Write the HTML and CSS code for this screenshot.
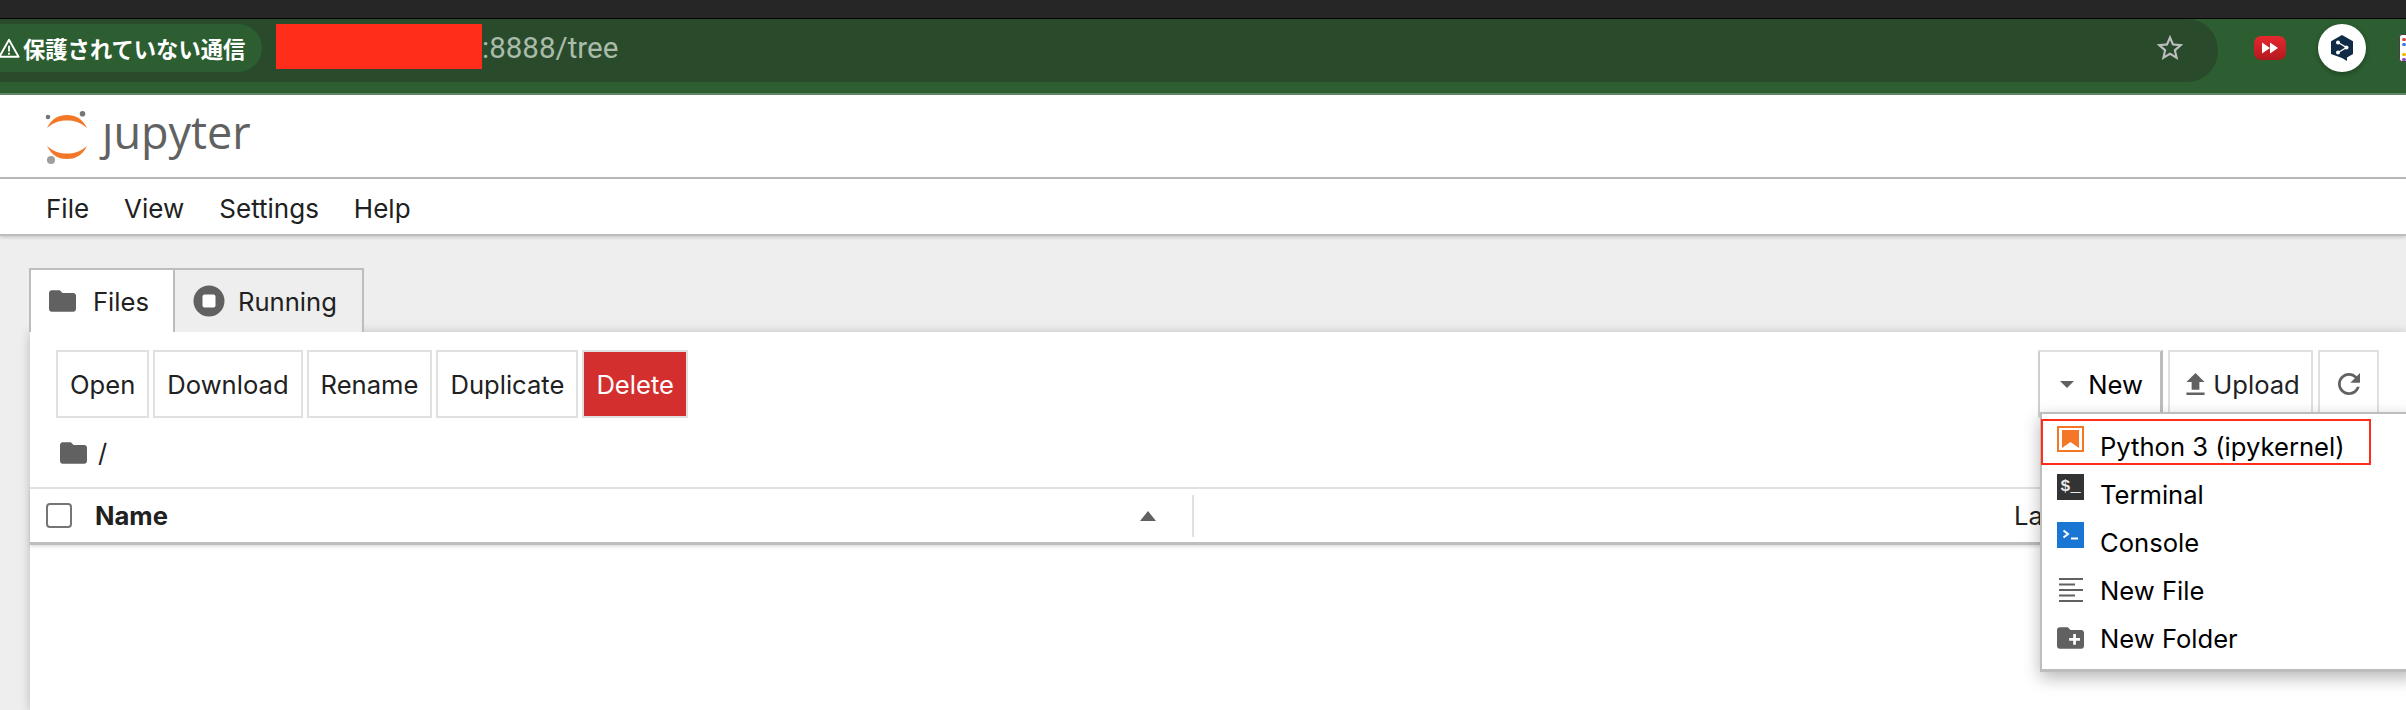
FILE: index.html
```html
<!DOCTYPE html>
<html lang="ja">
<head>
    <meta charset="UTF-8">
    <title>Home</title>
    <link rel="stylesheet" href="styles.css">
</head>
<body>
    <div class="browser-top"></div>
    <div class="browser-bar">
        <div class="address">
            <div class="chip">
                <svg class="warn-icon" viewBox="0 0 20 20"><path d="M10 2.5 18.7 18H1.3z" fill="none" stroke="#fff" stroke-width="1.7" stroke-linejoin="round"/><path d="M9.2 8h1.6v5.2H9.2zM9.2 14.4h1.6v1.7H9.2z" fill="#fff"/></svg>
                <span>保護されていない通信</span>
            </div>
            <div class="redacted"></div>
            <div class="url">:8888/tree</div>
            <svg class="star" viewBox="0 0 24 24"><path d="M22 9.24l-7.19-.62L12 2 9.19 8.63 2 9.24l5.46 4.73L5.82 21 12 17.27 18.18 21l-1.63-7.03L22 9.24zM12 15.4l-3.76 2.27 1-4.28-3.32-2.88 4.38-.38L12 6.1l1.71 4.04 4.38.38-3.32 2.88 1 4.28L12 15.4z"/></svg>
        </div>
        <div class="ext-red">
            <svg viewBox="0 0 32 24"><path d="M8 6.5 16 12l-8 5.500zM16 6.500 24 12l-8 5.500z" fill="#fff"/></svg>
        </div>
        <div class="ext-deepl">
            <svg viewBox="0 0 24 28"><path d="M12 1 23 7.300V20l-6 3.500V27l-5-3L1 20V7.300z" fill="#0f2b46"/><path d="M8 8.500 16.500 13.500 8 18.500" fill="none" stroke="#fff" stroke-width="1.400"/><circle cx="8" cy="8.500" r="2" fill="#fff"/><circle cx="16.500" cy="13.500" r="2" fill="#fff"/><circle cx="8" cy="18.500" r="2" fill="#fff"/></svg>
        </div>
        <div class="ext-list">
            <i class="dot-red"></i><i class="dot-blue"></i><i class="dot-yellow"></i><i class="dot-purple"></i>
        </div>
    </div>

    <header class="top-panel">
        <svg class="jp-mark" viewBox="0 0 44 54">
            <path d="M2 17C7 7 14 4 22 4s15 3 20 13C35 11 29 9.500 22 9.500S9 11 2 17z" fill="#f37726"/>
            <path d="M2 35C9 41 15 42.500 22 42.500S35 41 42 35C37 45 30 48 22 48S7 45 2 35z" fill="#f37726"/>
            <circle cx="3" cy="6" r="2.300" fill="#767677"/>
            <circle cx="37.500" cy="2.800" r="2.800" fill="#767677"/>
            <circle cx="6" cy="49" r="4" fill="#9e9e9e"/>
        </svg>
        <div class="jp-word"><span class="jp-j">j</span>upyter</div>
    </header>

    <nav class="menu-bar">
        <span>File</span>
        <span>View</span>
        <span>Settings</span>
        <span>Help</span>
    </nav>

    <main class="main-area">
        <div class="tabs">
            <div class="tab tab-active">
                <svg class="folder-icon" viewBox="2 4 20 16"><path d="M10 4H4c-1.100 0-1.990.9-1.990 2L2 18c0 1.100.9 2 2 2h16c1.100 0 2-.9 2-2V8c0-1.100-.9-2-2-2h-8l-2-2z"/></svg>
                <span>Files</span>
            </div>
            <div class="tab">
                <svg class="stop-icon" viewBox="0 0 32 32"><circle cx="16" cy="16" r="15.500"/><rect x="9.500" y="9.500" width="13" height="13" rx="2" fill="#fff"/></svg>
                <span>Running</span>
            </div>
        </div>

        <section class="panel">
            <div class="toolbar">
                <button class="btn">Open</button>
                <button class="btn">Download</button>
                <button class="btn">Rename</button>
                <button class="btn">Duplicate</button>
                <button class="btn btn-danger">Delete</button>
                <div class="toolbar-right">
                    <button class="btn btn-new">
                        <svg class="caret" viewBox="0 0 14 7"><path d="M0 0h14L7 7z"/></svg>
                        <span>New</span>
                    </button>
                    <button class="btn btn-upload">
                        <svg class="upload-icon" viewBox="5 3 14 17"><path d="M9 16h6v-6h4l-7-7-7 7h4zm-4 2h14v2H5z"/></svg>
                        <span>Upload</span>
                    </button>
                    <button class="btn btn-refresh">
                        <svg class="refresh-icon" viewBox="4 4 16 16"><path d="M17.650 6.350C16.200 4.900 14.210 4 12 4c-4.420 0-7.990 3.580-7.990 8s3.570 8 7.990 8c3.730 0 6.840-2.550 7.730-6h-2.080c-.82 2.330-3.040 4-5.650 4-3.310 0-6-2.690-6-6s2.690-6 6-6c1.660 0 3.140.69 4.220 1.780L13 11h7V4l-2.350 2.350z"/></svg>
                    </button>
                </div>
            </div>

            <div class="crumbs">
                <svg class="folder-icon" viewBox="2 4 20 16"><path d="M10 4H4c-1.100 0-1.990.9-1.990 2L2 18c0 1.100.9 2 2 2h16c1.100 0 2-.9 2-2V8c0-1.100-.9-2-2-2h-8l-2-2z"/></svg>
                <span>/</span>
            </div>

            <div class="list-header">
                <div class="col-name">
                    <span class="checkbox"></span>
                    <span class="col-title">Name</span>
                    <svg class="sort-caret" viewBox="0 0 16 10"><path d="M8 0l8 10H0z"/></svg>
                </div>
                <div class="col-modified">Last Modified</div>
            </div>
        </section>
    </main>

    <div class="new-menu">
        <div class="menu-item item-hilite">
            <svg class="item-icon icon-top" viewBox="0 0 27 26"><rect x="1" y="1" width="25" height="24" fill="#fff" stroke="#f37726" stroke-width="2"/><path d="M5 4h17v18l-8.500-6L5 22z" fill="#f37726"/></svg>
            <span>Python 3 (ipykernel)</span>
        </div>
        <div class="menu-item">
            <div class="item-icon icon-top term-icon">$_</div>
            <span>Terminal</span>
        </div>
        <div class="menu-item">
            <svg class="item-icon icon-top" viewBox="0 0 27 26"><rect width="27" height="26" fill="#1976d2"/><path d="M6.500 8.500 11 12l-4.500 3.500" fill="none" stroke="#fff" stroke-width="2"/><path d="M14 15.500h7v2h-7z" fill="#fff"/></svg>
            <span>Console</span>
        </div>
        <div class="menu-item">
            <svg class="item-icon" viewBox="0 0 27 26" fill="#616161"><path d="M2 1h24v2H2zM2 6.500h16v2H2zM2 12h24v2H2zM2 17.500h16v2H2zM2 23h24v2H2z"/></svg>
            <span>New File</span>
        </div>
        <div class="menu-item">
            <svg class="item-icon" viewBox="2 4 20 16"><path d="M20 6h-8l-2-2H4c-1.110 0-1.990.89-1.990 2L2 18c0 1.110.89 2 2 2h16c1.110 0 2-.89 2-2V8c0-1.110-.89-2-2-2zm-1 8h-3v3h-2v-3h-3v-2h3V9h2v3h3v2z" fill="#616161"/></svg>
            <span>New Folder</span>
        </div>
    </div>
</body>
</html>
```

FILE: styles.css
```css
body {
    margin: 0;
    height: 710px;
    overflow: hidden;
    position: relative;
    background-color: #eeeeee;
    color: #212121;
    font-family: Inter, "Liberation Sans", sans-serif;
    font-size: 25.6px;
}

/* browser chrome */
.browser-top {
    height: 18px;
    background-color: #262626;
    border-bottom: 1px solid #000;
}

.browser-bar {
    display: flex;
    align-items: flex-start;
    height: 74px;
    background-color: #2c5e31;
    border-bottom: 2px solid #5f8664;
}

.address {
    display: flex;
    flex: none;
    align-items: flex-start;
    box-sizing: border-box;
    width: 2218px;
    height: 63px;
    padding-top: 5px;
    background-color: #294b2c;
    border-radius: 0 31px 31px 0;
}

.chip {
    display: flex;
    align-items: center;
    gap: 3px;
    box-sizing: border-box;
    width: 262px;
    height: 48px;
    background-color: #2c5e31;
    border-radius: 0 24px 24px 0;
    color: #fff;
    font-family: "Noto Sans CJK JP", sans-serif;
    font-size: 22.300px;
    font-weight: 700;
    line-height: 1;
}

.warn-icon {
    width: 22px;
    height: 22px;
    margin-left: -2px;
}

.redacted {
    width: 206px;
    height: 45px;
    margin-left: 14px;
    background-color: #ff2d1a;
}

.url {
    flex: 1;
    height: 48px;
    color: #a9bcaa;
    font-family: Roboto, sans-serif;
    font-size: 29.500px;
    line-height: 49px;
}

.star {
    width: 32px;
    height: 32px;
    margin: 8px 32px 0 0;
    fill: #bdbdbd;
}

.ext-red {
    flex: none;
    width: 32px;
    height: 24px;
    margin: 17px 0 0 36px;
    border-radius: 7px;
    background: linear-gradient(#e5282e, #b3191e);
}

.ext-red svg {
    display: block;
}

.ext-deepl {
    display: flex;
    flex: none;
    align-items: center;
    justify-content: center;
    width: 48px;
    height: 48px;
    margin: 5px 0 0 32px;
    border-radius: 50%;
    background-color: #fff;
    box-shadow: 0 2px 5px rgba(0, 0, 0, 0.3);
}

.ext-deepl svg {
    width: 24px;
    height: 28px;
}

.ext-list {
    display: grid;
    flex: none;
    grid-template-columns: 4px;
    align-content: start;
    gap: 2px;
    box-sizing: border-box;
    width: 24px;
    height: 28px;
    margin: 15px 0 0 33px;
    padding: 3px 2px;
    background-color: #fff;
    border: 1px solid #444;
    border-radius: 3px;
}

.ext-list i {
    width: 4px;
    height: 3px;
    border-radius: 2px;
}

.dot-red { background-color: #e8453c; }
.dot-blue { background-color: #3b78e7; margin-bottom: 5px; }
.dot-yellow { background-color: #f4b400; }
.dot-purple { background-color: #8e44ce; }

/* jupyter header */
.top-panel {
    display: flex;
    align-items: flex-start;
    box-sizing: border-box;
    height: 84px;
    padding: 16px 0 0 45px;
    background-color: #fff;
    border-bottom: 2px solid #bdbdbd;
}

.jp-mark {
    width: 44px;
    height: 54px;
}

.jp-word {
    margin: -5px 0 0 13px;
    color: #616161;
    font-family: "Open Sans", sans-serif;
    font-size: 45px;
    line-height: 52px;
}

.jp-j {
    display: inline-block;
    clip-path: inset(16px -4px -10px -12px);
}

.menu-bar {
    display: flex;
    align-items: center;
    gap: 35px;
    box-sizing: border-box;
    height: 57px;
    padding: 3px 0 0 46px;
    background-color: #fff;
    border-bottom: 2px solid #bdbdbd;
    box-shadow: 0 1px 4px rgba(0, 0, 0, 0.2);
    font-size: 26px;
}

/* tabs + file browser */
.main-area {
    padding: 32px 0 0 29px;
}

.tabs {
    display: flex;
    position: relative;
    z-index: 1;
    height: 64px;
    box-sizing: border-box;
}

.tab {
    display: flex;
    align-items: center;
    gap: 13px;
    box-sizing: border-box;
    width: 189px;
    height: 64px;
    padding-left: 18px;
    border: 2px solid #bdbdbd;
    border-bottom: 0;
    border-left: 0;
    background-color: #eeeeee;
}

.tab-active {
    gap: 17px;
    width: 146px;
    background-color: #fff;
    border-left: 2px solid #bdbdbd;
}

.folder-icon {
    width: 27px;
    height: 22px;
    fill: #616161;
}

.stop-icon {
    width: 32px;
    height: 32px;
    fill: #616161;
}

.panel {
    height: 378px;
    margin-left: 1px;
    background-color: #fff;
    box-shadow: 0 1px 10px rgba(0, 0, 0, 0.22);
}

.toolbar {
    display: flex;
    gap: 4px;
    padding: 18px 27px 0 26px;
}

.btn {
    display: flex;
    align-items: center;
    justify-content: center;
    box-sizing: border-box;
    height: 68px;
    padding: 0 12px;
    background-color: #fff;
    border: 2px solid #e0e0e0;
    color: #212121;
    font-family: inherit;
    font-size: 25.6px;
}

.btn-danger {
    background-color: #d32f2f;
    color: #fff;
}

.toolbar-right {
    display: flex;
    gap: 5px;
    margin-left: auto;
}

.btn-new {
    gap: 14px;
    width: 125px;
    padding: 0 0 0 3px;
    border-left-color: #cfcfcf;
    border-right: 3px solid #bdbdbd;
    color: #000;
}

.caret {
    width: 14px;
    height: 7px;
    fill: #616161;
}

.btn-upload {
    gap: 8px;
    width: 145px;
    padding: 0 0 0 5px;
}

.upload-icon {
    width: 19px;
    height: 22px;
    fill: #616161;
}

.btn-refresh {
    width: 61px;
}

.refresh-icon {
    width: 22px;
    height: 22px;
    fill: #616161;
}

.crumbs {
    display: flex;
    align-items: center;
    gap: 11px;
    height: 69px;
    padding-left: 30px;
}

.list-header {
    display: flex;
    align-items: center;
    height: 53px;
    border-top: 2px solid #e0e0e0;
    border-bottom: 3px solid #bdbdbd;
    box-shadow: 0 2px 3px rgba(0, 0, 0, 0.12);
}

.col-name {
    display: flex;
    align-items: center;
    box-sizing: border-box;
    width: 1164px;
    height: 42px;
    padding: 0 36px 0 16px;
    border-right: 2px solid #e0e0e0;
}

.checkbox {
    box-sizing: border-box;
    width: 26px;
    height: 25px;
    border: 2px solid #757575;
    border-radius: 4px;
}

.col-title {
    margin-left: 23px;
    font-weight: 700;
}

.sort-caret {
    width: 16px;
    height: 10px;
    margin-left: auto;
    fill: #616161;
}

.col-modified {
    padding-left: 820px;
}

/* New dropdown, sits over the list */
.new-menu {
    position: absolute;
    top: 412px;
    left: 2040px;
    right: -10px;
    box-sizing: border-box;
    height: 260px;
    padding-top: 8px;
    background-color: #fff;
    border: 2px solid #bdbdbd;
    border-bottom-width: 3px;
    border-right: 0;
    box-shadow: 0 6px 16px rgba(0, 0, 0, 0.28);
    color: #000;
}

.menu-item {
    display: flex;
    align-items: center;
    gap: 16px;
    height: 48px;
    padding-left: 15px;
}

.item-icon {
    flex: none;
    width: 27px;
    height: 26px;
}

.icon-top {
    align-self: flex-start;
    margin-top: 4px;
}

.term-icon {
    background-color: #333;
    color: #e8e8e8;
    font-family: "Liberation Mono", monospace;
    font-size: 17px;
    font-weight: 700;
    line-height: 26px;
    text-align: center;
}

.item-hilite {
    position: relative;
}

.item-hilite::after {
    content: "";
    position: absolute;
    top: -3px;
    left: -1px;
    width: 330px;
    height: 46px;
    box-sizing: border-box;
    border: 2px solid #ff2d1a;
}
```
